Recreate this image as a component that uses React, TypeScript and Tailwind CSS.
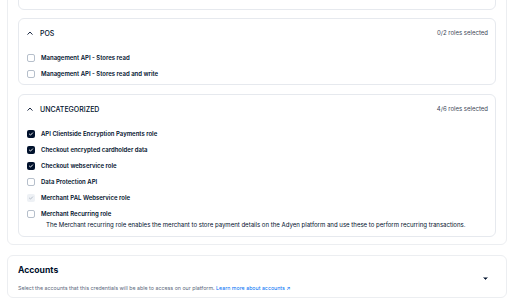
import React from "react";

const navy = "text-[#00112c]";

function Chevron({ up = true }: { up?: boolean }) {
  return (
    <svg width="6" height="4" viewBox="0 0 6 4" className="shrink-0">
      <path
        d={up ? "M0.8 3.3 L3 1 L5.2 3.3" : "M0.8 0.8 L3 3 L5.2 0.8"}
        fill="none"
        stroke="#00112c"
        strokeWidth="0.9"
        strokeLinecap="round"
        strokeLinejoin="round"
      />
    </svg>
  );
}

type State = "checked" | "unchecked" | "disabled";

function Box({ state }: { state: State }) {
  if (state === "checked")
    return (
      <span className="flex h-[8px] w-[8px] shrink-0 items-center justify-center rounded-[2px] bg-[#00112c]">
        <svg width="6" height="6" viewBox="0 0 6 6">
          <path d="M1.4 3.1 L2.5 4.1 L4.6 1.9" fill="none" stroke="#fff" strokeWidth="0.9" strokeLinecap="round" strokeLinejoin="round" />
        </svg>
      </span>
    );
  if (state === "disabled")
    return (
      <span className="flex h-[8px] w-[8px] shrink-0 items-center justify-center rounded-[2px] bg-[#eef1f5]">
        <svg width="6" height="6" viewBox="0 0 6 6">
          <path d="M1.4 3.1 L2.5 4.1 L4.6 1.9" fill="none" stroke="#a9b3c0" strokeWidth="0.8" strokeLinecap="round" strokeLinejoin="round" />
        </svg>
      </span>
    );
  return <span className="h-[8px] w-[8px] shrink-0 rounded-[2px] border border-[#b6bfcb] bg-white" />;
}

function Row({ label, state }: { label: string; state: State }) {
  return (
    <div className="flex h-[16px] items-center gap-[6px]">
      <Box state={state} />
      <span className={`text-[6px] font-semibold leading-none ${navy}`}>{label}</span>
    </div>
  );
}

function Group({
  title,
  count,
  children,
}: {
  title: string;
  count: string;
  children: React.ReactNode;
}) {
  return (
    <div className="rounded-[6px] border border-[#e6e9ee] bg-white pl-[8px] pr-[7px] pt-[7px]">
      <div className="flex h-[14px] items-center justify-between">
        <div className="flex items-center gap-[7px]">
          <Chevron />
          <span className={`text-[7px] font-medium leading-none ${navy}`}>{title}</span>
        </div>
        <span className="text-[6px] leading-none text-[#3b4656]">{count}</span>
      </div>
      <div className="mt-[10px]">{children}</div>
    </div>
  );
}

export default function App() {
  return (
    <div className="h-[307px] w-[518px] overflow-hidden bg-white" style={{ fontFamily: "Inter, 'Noto Sans', sans-serif" }}>
      <div className="-mt-[20px] ml-[7px] flex w-[500px] flex-col rounded-[6px] border border-[#eceef1] px-[10px] pb-[7px]">
        <div className="h-[29px] rounded-[6px] border border-[#e6e9ee]" />
        <div className="mt-[8px]">
          <Group title="POS" count="0/2 roles selected">
            <div className="pb-[2px]">
              <Row label="Management API - Stores read" state="unchecked" />
              <Row label="Management API - Stores read and write" state="unchecked" />
            </div>
          </Group>
        </div>
        <div className="mt-[9px]">
          <Group title="UNCATEGORIZED" count="4/6 roles selected">
            <div className="pb-[6px]">
              <Row label="API Clientside Encryption Payments role" state="checked" />
              <Row label="Checkout encrypted cardholder data" state="checked" />
              <Row label="Checkout webservice role" state="checked" />
              <Row label="Data Protection API" state="unchecked" />
              <Row label="Merchant PAL Webservice role" state="disabled" />
              <Row label="Merchant Recurring role" state="unchecked" />
              <div className={`-mt-[2px] pl-[19px] text-[6.05px] leading-[10px] ${navy}`}>
                The Merchant recurring role enables the merchant to store payment details on the Adyen platform and use these to perform recurring transactions.
              </div>
            </div>
          </Group>
        </div>
      </div>
      <div className="ml-[7px] mt-[10px] flex w-[500px] items-center justify-between rounded-[6px] border border-[#eceef1] pb-[4px] pl-[10px] pr-[18px] pt-[8px]">
        <div>
          <div className={`text-[8.6px] font-bold leading-[12px] ${navy}`}>Accounts</div>
          <div className="mt-[7px] text-[5.3px] leading-[10px] text-[#5c687c]">
            Select the accounts that this credentials will be able to access on our platform.{" "}
            <span className="text-[#0070f5]">Learn more about accounts ↗</span>
          </div>
        </div>
        <svg width="5" height="3" viewBox="0 0 5 3">
          <path d="M0.5 0.5 L2.5 2.5 L4.5 0.5" fill="#00112c" stroke="#00112c" strokeWidth="0.6" strokeLinejoin="round" />
        </svg>
      </div>
    </div>
  );
}
